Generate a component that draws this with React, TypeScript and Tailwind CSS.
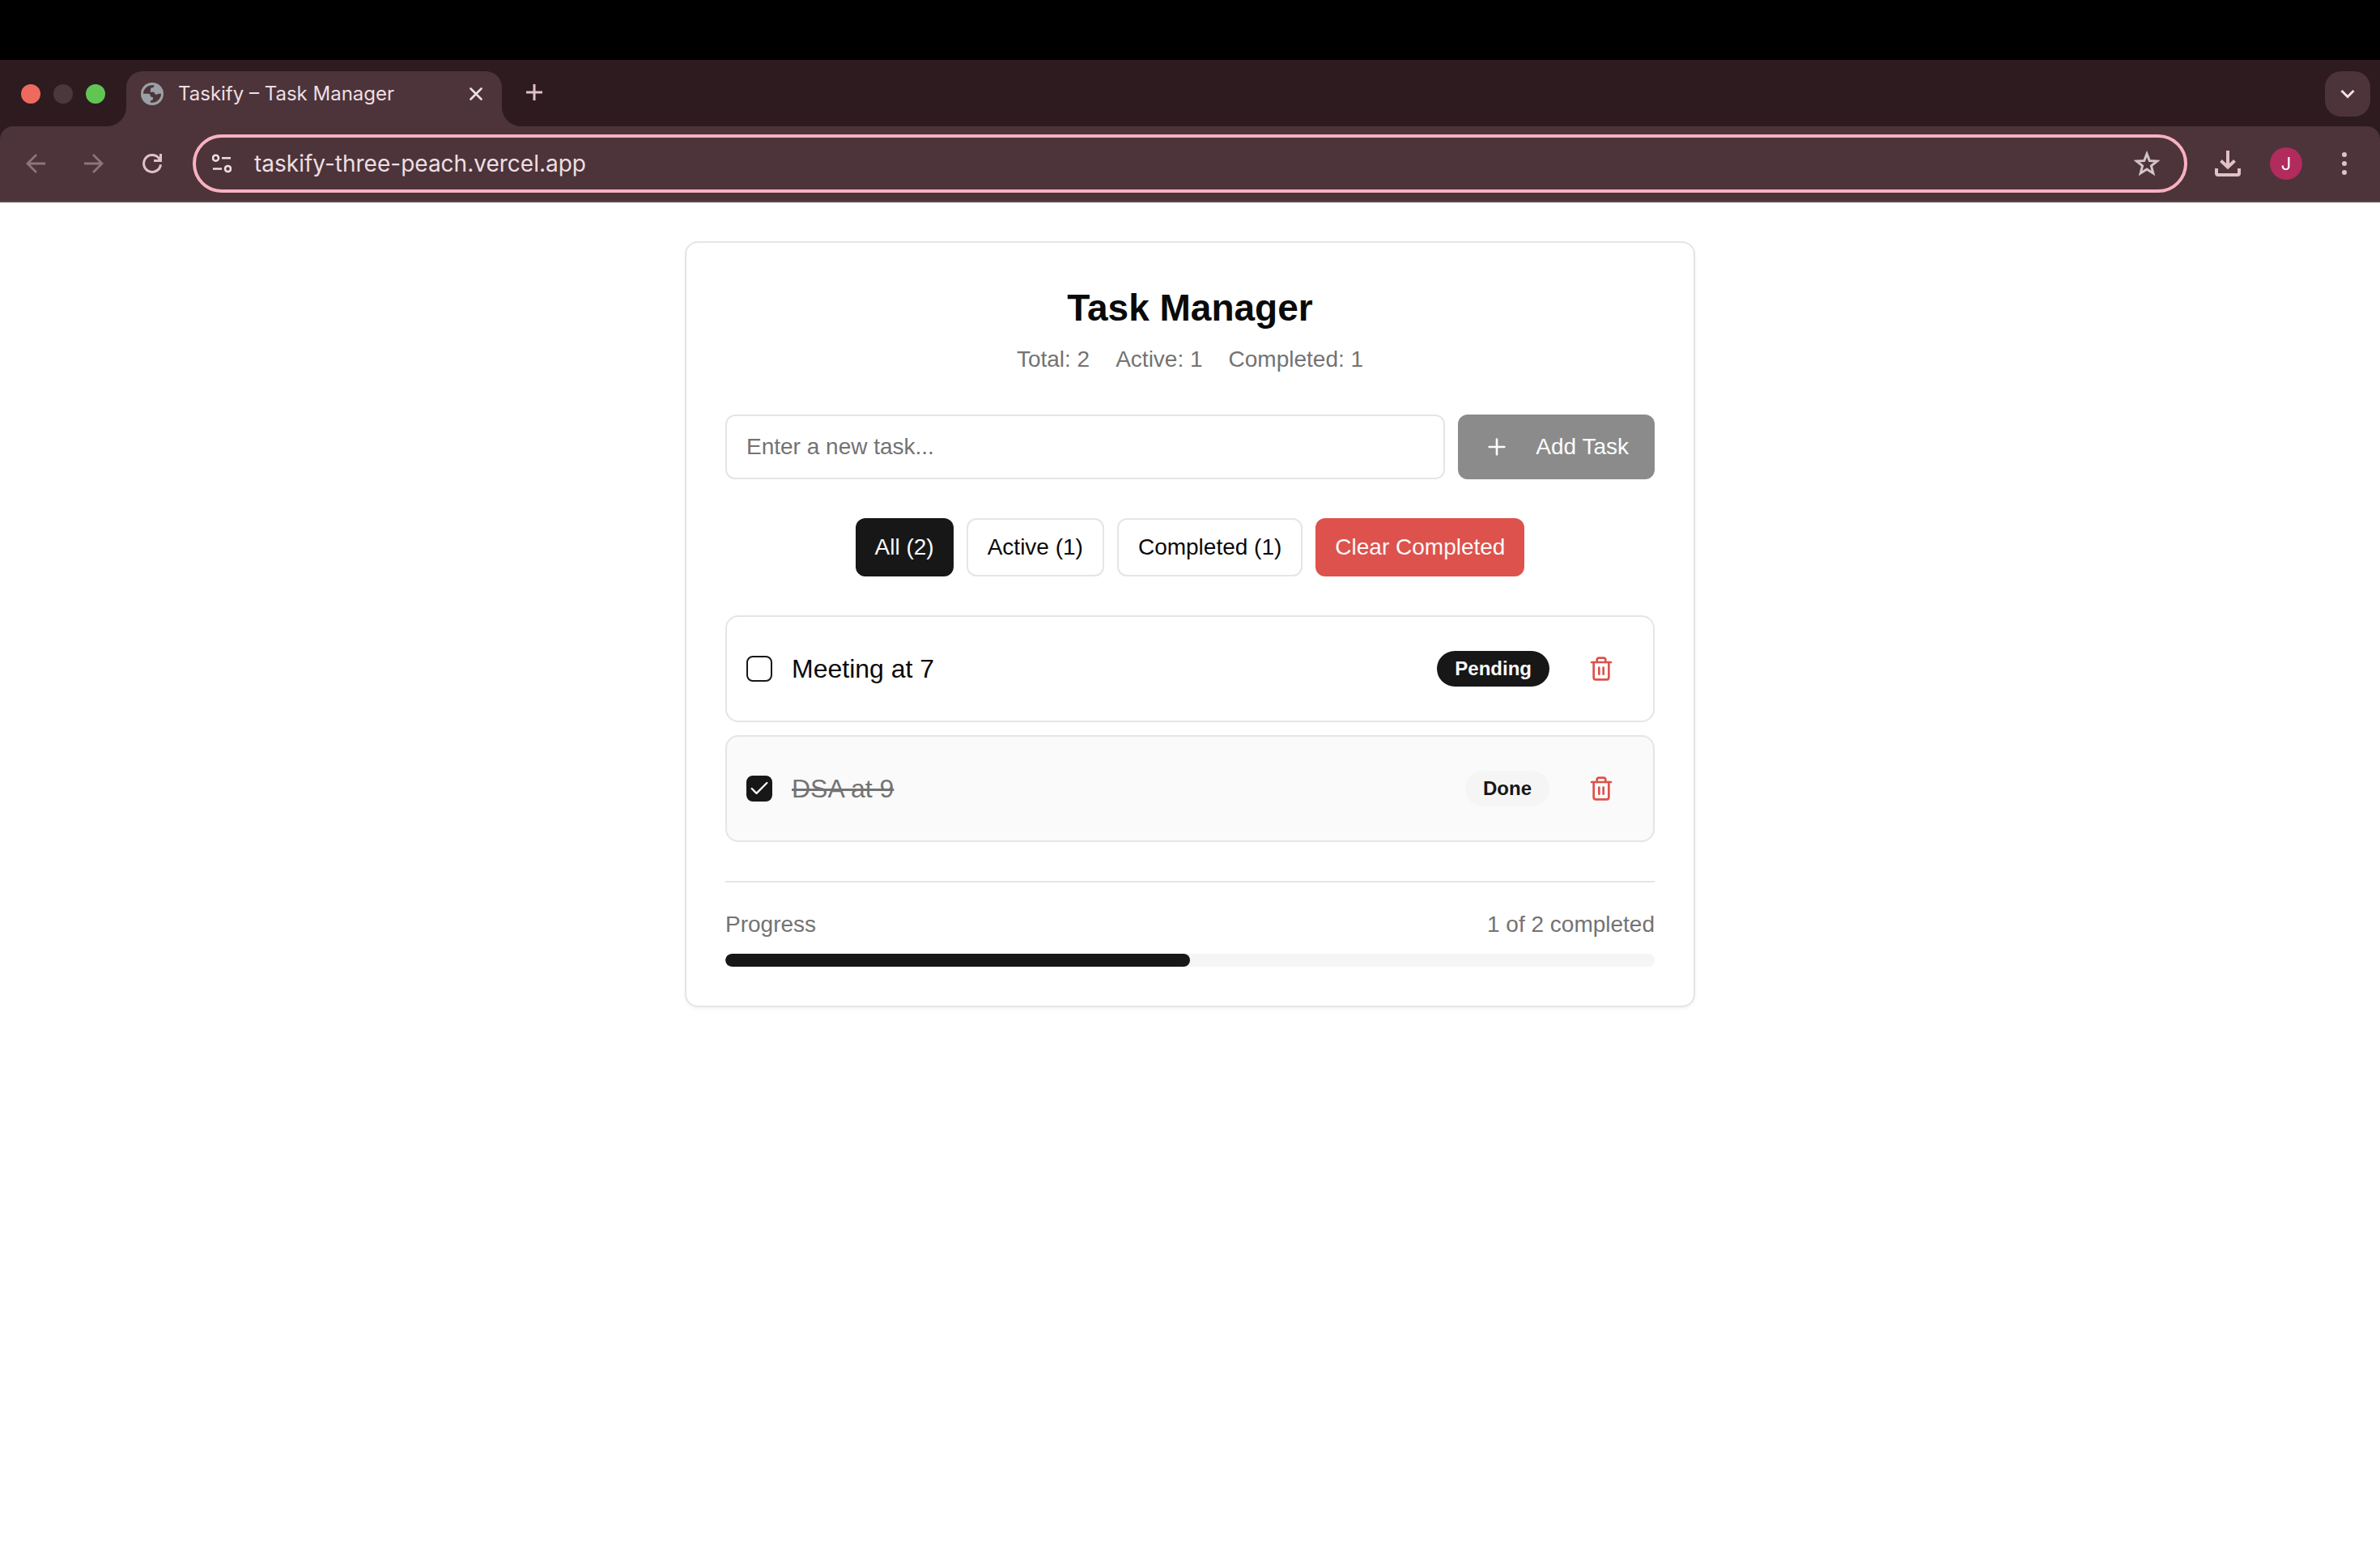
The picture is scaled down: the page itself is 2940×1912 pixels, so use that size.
import { useState } from "react";
import { Check, Plus, Trash2 } from "lucide-react";

type Task = { id: string; title: string; done: boolean };
type Filter = "all" | "active" | "completed";

const initialTasks: Task[] = [
  { id: "task-1", title: "Meeting at 7", done: false },
  { id: "task-2", title: "DSA at 9", done: true },
];

function GlobeIcon() {
  return (
    <svg className="size-7 shrink-0" viewBox="0 0 28 28" aria-hidden="true">
      <circle cx="14" cy="14" r="14" fill="#9aa0a6" />
      <path
        d="M3 13.8C3 8 8 3.2 14 3.2c.9 0 1.8.1 2.6.3-.3 1.8-1 2.6-2.4 2.7-1.6.1-2.3.8-2.2 2.3.1 1 .1 1.7-.5 2.3l.4.9h3.4c1.1 0 1.6.6 1.8 1.5.3 1.2 1.2 1.6 2.4 1.5 1.1-.1 1.5-.9 2.5-.9h3c0 6-4.9 11-11 11-.9 0-1.5-.1-2.1-.3v-2.2c2.1-.3 3-1.1 3.2-2.5.1-1.3-.5-2-1.7-2.1-1.3-.1-1.6-.7-1.7-1.7-.1-1.3-.9-2.2-2.2-2.2z"
        fill="#4c343a"
      />
    </svg>
  );
}

function TabFlare({ side }: { side: "left" | "right" }) {
  return (
    <svg className="size-6 shrink-0 self-end" viewBox="0 0 24 24" aria-hidden="true">
      <path d={side === "left" ? "M24 0v24H0C13.3 24 24 13.3 24 0z" : "M0 0v24h24C10.7 24 0 13.3 0 0z"} fill="#4c343a" />
    </svg>
  );
}

function TabStrip() {
  return (
    <div className="flex h-[82px] items-start pt-[14px] pr-3 pl-[26px]">
      <div className="mr-0.5 flex h-14 items-center gap-4">
        <button type="button" aria-label="Close window" className="size-6 rounded-full bg-[#ee6a5e]" />
        <button type="button" aria-label="Minimize window" className="size-6 rounded-full bg-[#4b383f]" />
        <button type="button" aria-label="Zoom window" className="size-6 rounded-full bg-[#61c554]" />
      </div>
      <TabFlare side="left" />
      <div className="flex h-[68px] w-[464px] items-center gap-[18px] rounded-t-[20px] bg-[#4c343a] pr-4 pb-3 pl-[18px]">
        <GlobeIcon />
        <span className="flex-1 truncate text-[24px] leading-8 text-[#eedfe2]">Taskify – Task Manager</span>
        <button type="button" aria-label="Close tab" className="flex size-8 items-center justify-center">
          <svg className="size-4" viewBox="0 0 16 16" fill="none" stroke="#eedfe2" strokeWidth="2.6" strokeLinecap="round" aria-hidden="true">
            <path d="M1.5 1.5l13 13M14.5 1.5l-13 13" />
          </svg>
        </button>
      </div>
      <TabFlare side="right" />
      <button type="button" aria-label="New tab" className="flex h-[52px] w-8 items-center justify-center">
        <svg className="size-5" viewBox="0 0 20 20" fill="none" stroke="#e2c0c8" strokeWidth="3" aria-hidden="true">
          <path d="M10 0v20M0 10h20" />
        </svg>
      </button>
      <button type="button" aria-label="Search tabs" className="ml-auto flex size-14 items-center justify-center rounded-[20px] bg-[#4c343a]">
        <svg className="h-3 w-5" viewBox="0 0 20 12" fill="none" stroke="#f3e2e6" strokeWidth="3" aria-hidden="true">
          <path d="M2.5 2l7.5 7.5L17.5 2" />
        </svg>
      </button>
    </div>
  );
}

function Toolbar() {
  return (
    <div className="flex items-center gap-[22px] rounded-t-2xl border-b-2 border-[#58454b] bg-[#4c343a] px-4 py-2.5">
      <div className="flex gap-4">
        <button type="button" aria-label="Back" className="flex size-14 items-center justify-center">
          <svg className="size-6" viewBox="0 0 24 24" fill="none" stroke="#8c747a" strokeWidth="2.8" aria-hidden="true">
            <path d="M24 12H2M13 1L2 12l11 11" />
          </svg>
        </button>
        <button type="button" aria-label="Forward" className="flex size-14 items-center justify-center">
          <svg className="size-6" viewBox="0 0 24 24" fill="none" stroke="#8c747a" strokeWidth="2.8" aria-hidden="true">
            <path d="M0 12h22M11 1l11 11-11 11" />
          </svg>
        </button>
        <button type="button" aria-label="Reload" className="flex size-14 items-center justify-center">
          <svg className="size-6" viewBox="0 0 24 24" fill="none" stroke="#e2c0c8" strokeWidth="3" aria-hidden="true">
            <path d="M22.5 13.2A10.5 10.5 0 1 1 20 5l2 2.5M22.5 0v8.5H14" />
            <path d="M24 0v10h-6z" fill="#e2c0c8" stroke="none" />
          </svg>
        </button>
      </div>
      <div className="flex h-[72px] flex-1 items-center rounded-full border-4 border-[#f8b1c2] pr-[26px] pl-3">
        <button type="button" aria-label="View site information" className="mr-5 flex size-10 items-center justify-center">
          <svg className="size-6" viewBox="0 0 24 24" fill="none" stroke="#eedfe2" strokeWidth="2.6" aria-hidden="true">
            <circle cx="4.5" cy="5.2" r="3.5" />
            <path d="M12 5.2h11M1 18.5h11" />
            <circle cx="19.5" cy="18.5" r="3.5" />
          </svg>
        </button>
        <input
          type="text"
          aria-label="Address bar"
          defaultValue="taskify-three-peach.vercel.app"
          className="min-w-0 flex-1 bg-transparent text-[28px] leading-10 text-[#eedfe2] outline-none"
        />
        <button type="button" aria-label="Bookmark this tab" className="flex size-10 items-center justify-center">
          <svg className="size-8" viewBox="0 0 32 32" fill="none" stroke="#d2c4c8" strokeWidth="3" aria-hidden="true">
            <path d="M16 4l3.3 8.5 9.2.6-7.1 5.8 2.4 9L16 23l-7.8 4.9 2.4-9-7.1-5.8 9.2-.6z" />
          </svg>
        </button>
      </div>
      <div className="flex gap-4">
        <button type="button" aria-label="Downloads" className="flex size-14 items-center justify-center">
          <svg className="size-8" viewBox="0 0 32 32" fill="none" stroke="#e2c0c8" strokeWidth="4" aria-hidden="true">
            <path d="M16 0v20M7.5 12.5l8.5 8 8.5-8" />
            <path d="M2 22v6q0 2 2 2h24q2 0 2-2v-6" />
          </svg>
        </button>
        <button type="button" aria-label="Profile J" className="flex size-14 items-center justify-center">
          <span className="flex size-10 items-center justify-center rounded-full bg-[#b12b5c] text-[22px] leading-8 text-white">J</span>
        </button>
        <button type="button" aria-label="Browser menu" className="flex size-14 items-center justify-center">
          <svg className="h-7 w-2" viewBox="0 0 8 28" fill="#e2c0c8" aria-hidden="true">
            <circle cx="4" cy="3" r="3" />
            <circle cx="4" cy="14" r="3" />
            <circle cx="4" cy="25" r="3" />
          </svg>
        </button>
      </div>
    </div>
  );
}

type TaskRowProps = { task: Task; onToggle: () => void; onDelete: () => void };

function TaskRow({ task, onToggle, onDelete }: TaskRowProps) {
  return (
    <li className={`flex items-center gap-6 rounded-2xl border-2 border-[#e5e5e5] p-6 ${task.done ? "bg-[#fafafa]" : "bg-white"}`}>
      <span className="relative flex">
        <input
          id={task.id}
          type="checkbox"
          checked={task.done}
          onChange={onToggle}
          className="size-8 appearance-none rounded-lg border-2 border-[#171717] bg-white checked:bg-[#171717]"
        />
        {task.done && <Check className="pointer-events-none absolute inset-0 m-auto size-7 text-[#fafafa]" aria-hidden="true" />}
      </span>
      <label
        htmlFor={task.id}
        className={`flex-1 text-[32px] leading-12 ${task.done ? "text-[#737373] line-through decoration-[3px]" : "text-[#0a0a0a]"}`}
      >
        {task.title}
      </label>
      <span
        className={`rounded-full px-[22px] py-1.5 text-[24px] leading-8 font-bold ${
          task.done ? "bg-[#f5f5f5] text-[#171717]" : "bg-[#171717] text-[#fafafa]"
        }`}
      >
        {task.done ? "Done" : "Pending"}
      </span>
      <button type="button" onClick={onDelete} aria-label={`Delete ${task.title}`} className="flex size-20 items-center justify-center text-[#dd524c]">
        <Trash2 className="size-8" aria-hidden="true" />
      </button>
    </li>
  );
}

function TaskManager() {
  const [tasks, setTasks] = useState(initialTasks);
  const [filter, setFilter] = useState<Filter>("all");
  const [draft, setDraft] = useState("");

  const completed = tasks.filter((t) => t.done).length;
  const active = tasks.length - completed;
  const visible = tasks.filter((t) => filter === "all" || t.done === (filter === "completed"));
  const percent = tasks.length ? (completed / tasks.length) * 100 : 0;

  const filters: { key: Filter; label: string }[] = [
    { key: "all", label: `All (${tasks.length})` },
    { key: "active", label: `Active (${active})` },
    { key: "completed", label: `Completed (${completed})` },
  ];

  const addTask = (event: { preventDefault: () => void }) => {
    event.preventDefault();
    if (!draft.trim()) return;
    setTasks([...tasks, { id: `task-${Date.now()}`, title: draft.trim(), done: false }]);
    setDraft("");
  };

  return (
    <section className="w-full max-w-[1248px] rounded-2xl border-2 border-[#e5e5e5] bg-white p-12 shadow-[0_2px_4px_rgba(0,0,0,0.05)]">
      <header className="flex flex-col items-center gap-3">
        <h1 className="text-[46px] leading-16 font-bold text-[#0a0a0a]">Task Manager</h1>
        <div className="flex gap-8 text-[28px] leading-10 text-[#737373]">
          <span>Total: {tasks.length}</span>
          <span>Active: {active}</span>
          <span>Completed: {completed}</span>
        </div>
      </header>

      <form onSubmit={addTask} className="mt-12 flex gap-4">
        <input
          type="text"
          aria-label="New task"
          placeholder="Enter a new task..."
          value={draft}
          onChange={(e) => setDraft(e.target.value)}
          className="h-20 min-w-0 flex-1 rounded-xl border-2 border-[#e5e5e5] px-6 text-[28px] text-[#0a0a0a] outline-none placeholder:text-[#737373]"
        />
        <button
          type="submit"
          disabled={!draft.trim()}
          className="flex h-20 items-center gap-8 rounded-xl bg-[#171717] px-8 text-[28px] leading-10 text-[#fcfcfc] disabled:bg-[#8b8b8b]"
        >
          <Plus className="size-8" aria-hidden="true" />
          Add Task
        </button>
      </form>

      <div className="mt-12 flex flex-wrap justify-center gap-4 text-[28px] leading-10">
        {filters.map(({ key, label }) => (
          <button
            key={key}
            type="button"
            aria-pressed={filter === key}
            onClick={() => setFilter(key)}
            className={`h-18 rounded-xl px-6 ${
              filter === key ? "bg-[#171717] text-[#fafafa]" : "border-2 border-[#e5e5e5] bg-white text-[#0a0a0a]"
            }`}
          >
            {label}
          </button>
        ))}
        <button type="button" onClick={() => setTasks(tasks.filter((t) => !t.done))} className="h-18 rounded-xl bg-[#dd524c] px-6 text-[#fafafa]">
          Clear Completed
        </button>
      </div>

      <ul className="mt-12 flex flex-col gap-4">
        {visible.map((task) => (
          <TaskRow
            key={task.id}
            task={task}
            onToggle={() => setTasks(tasks.map((t) => (t.id === task.id ? { ...t, done: !t.done } : t)))}
            onDelete={() => setTasks(tasks.filter((t) => t.id !== task.id))}
          />
        ))}
      </ul>

      <footer className="mt-12 border-t-2 border-[#e5e5e5] pt-8">
        <div className="flex justify-between text-[28px] leading-10 text-[#737373]">
          <span>Progress</span>
          <span>
            {completed} of {tasks.length} completed
          </span>
        </div>
        <div
          role="progressbar"
          aria-label="Progress"
          aria-valuenow={percent}
          aria-valuemin={0}
          aria-valuemax={100}
          className="mt-4 h-4 overflow-hidden rounded-full bg-[#f5f5f5]"
        >
          <div className="h-full rounded-full bg-[#171717]" style={{ width: `${percent}%` }} />
        </div>
      </footer>
    </section>
  );
}

export default function App() {
  return (
    <div className="min-h-screen bg-white">
      <header className="bg-[#2d1b1f] font-[Inter,sans-serif]">
        <div className="h-[74px] bg-black" />
        <TabStrip />
        <Toolbar />
      </header>
      <main className="flex justify-center px-8 py-12 font-['Liberation_Sans',Arial,sans-serif]">
        <TaskManager />
      </main>
    </div>
  );
}
